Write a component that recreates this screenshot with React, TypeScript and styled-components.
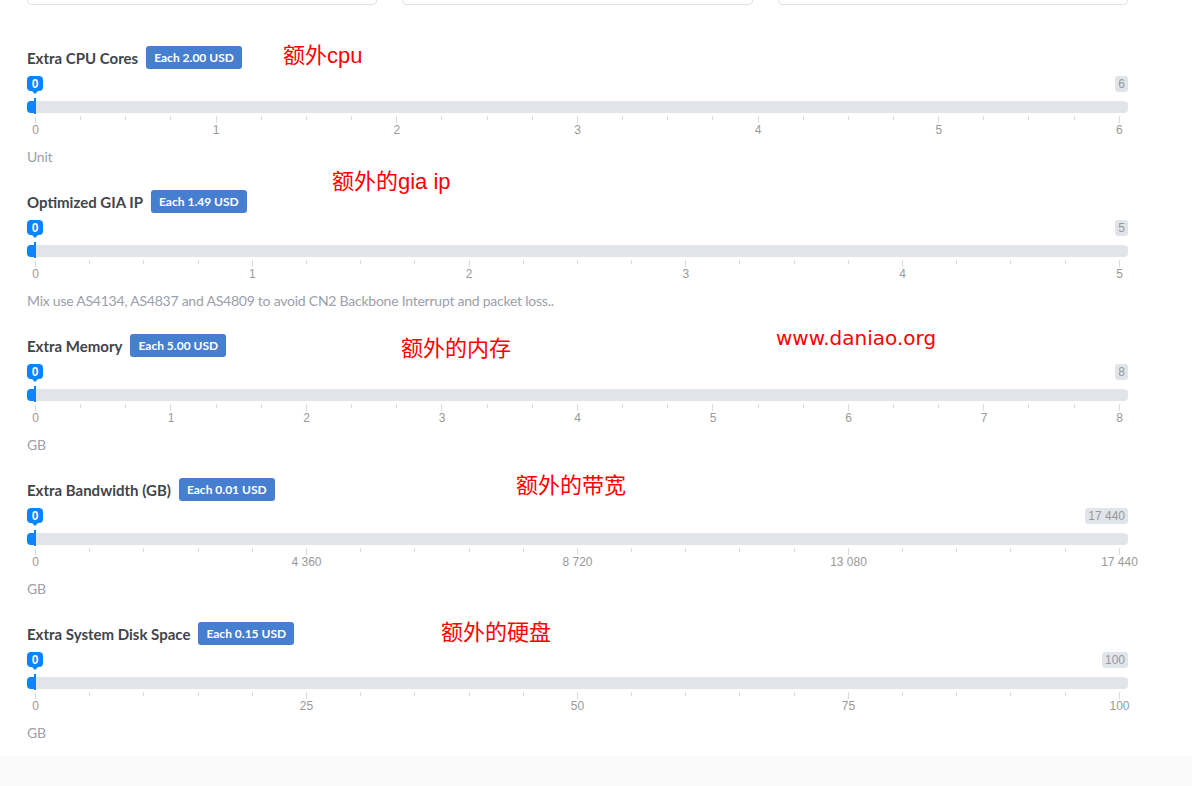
import React from "react";
import styled, { createGlobalStyle } from "styled-components";

const Global = createGlobalStyle`
  html, body { margin: 0; padding: 0; background: #fafafa; }
  body { font-family: "Lato", "Noto Sans", sans-serif; overflow: hidden; }
  #root { min-height: 786px; }
`;

const Page = styled.div`
  position: relative;
  height: 786px;
  overflow: hidden;
  background: #fafafa;
`;

const Sheet = styled.div`
  background: #ffffff;
  padding: 0 64px 13px 27px;
  display: flex;
  flex-direction: column;
`;

const CardRow = styled.div`
  display: grid;
  grid-template-columns: repeat(3, 1fr);
  gap: 25px;
  margin-top: -55px;
  margin-bottom: 41px;
`;

const Card = styled.div`
  height: 58px;
  border: 1px solid #e1e3e8;
  border-radius: 4px;
  background: #fff;
`;

const Sections = styled.div`
  display: flex;
  flex-direction: column;
  gap: 23px;
`;

const Section = styled.section`
  display: flex;
  flex-direction: column;
`;

const Header = styled.div`
  display: flex;
  align-items: center;
  gap: 8px;
  height: 23px;
`;

const Title = styled.h3`
  margin: 0;
  font-size: 15px;
  font-weight: 700;
  color: #41444b;
`;

const Badge = styled.span`
  display: inline-flex;
  align-items: center;
  height: 23px;
  padding: 0 8px;
  border-radius: 3px;
  background: #467fcf;
  color: #fff;
  font-size: 12px;
  font-weight: 700;
`;

const TopRow = styled.div`
  display: flex;
  justify-content: space-between;
  align-items: flex-start;
  height: 16px;
  margin-top: 7px;
`;

const Tip = styled.span`
  position: relative;
  display: inline-flex;
  align-items: center;
  justify-content: center;
  min-width: 16px;
  height: 15px;
  border-radius: 4px;
  background: #0a84ff;
  color: #fff;
  font-family: "Liberation Sans", Arial, sans-serif;
  font-size: 12px;
  font-weight: 700;
  &::after {
    content: "";
    position: absolute;
    left: 50%;
    bottom: -3px;
    margin-left: -3px;
    border-left: 3px solid transparent;
    border-right: 3px solid transparent;
    border-top: 3px solid #0a84ff;
  }
`;

const MaxLabel = styled.span`
  display: inline-flex;
  align-items: center;
  height: 16px;
  padding: 0 3px;
  border-radius: 3px;
  background: #e1e4e9;
  color: #999;
  font-family: "Liberation Sans", Arial, sans-serif;
  font-size: 12px;
`;

const Track = styled.div`
  position: relative;
  height: 12px;
  margin-top: 9px;
  border-radius: 4px;
  background: #e1e4e9;
`;

const Fill = styled.div`
  width: 8px;
  height: 100%;
  border-radius: 4px 0 0 4px;
  background: #0a84ff;
`;

const Handle = styled.div`
  position: absolute;
  left: 7px;
  top: -3px;
  width: 2px;
  height: 16px;
  background: #0a84ff;
`;

const TickRow = styled.div`
  display: flex;
  justify-content: space-between;
  align-items: flex-start;
  height: 7px;
  margin-top: 3px;
  padding: 0 8px;
`;

const Tick = styled.span<{ $major?: boolean }>`
  width: 1px;
  height: ${(p) => (p.$major ? "7px" : "4px")};
  background: #d8dbdf;
`;

const LabelRow = styled.div`
  display: flex;
  justify-content: space-between;
  height: 14px;
  padding: 0 8px;
`;

const Label = styled.span`
  width: 1px;
  display: flex;
  justify-content: center;
  white-space: nowrap;
  font-family: "Liberation Sans", Arial, sans-serif;
  font-size: 12px;
  line-height: 14px;
  color: #999;
`;

const Hint = styled.div`
  margin-top: 10px;
  font-size: 14px;
  line-height: 20px;
  letter-spacing: -0.24px;
  color: #9aa0ac;
`;

const Note = styled.div<{ $x: number; $y: number; $latin?: boolean }>`
  position: absolute;
  left: ${(p) => p.$x}px;
  top: ${(p) => p.$y}px;
  font-family: ${(p) =>
    p.$latin
      ? '"DejaVu Sans", "Noto Sans CJK SC", sans-serif'
      : '"Liberation Sans", "Noto Sans CJK SC", sans-serif'};
  font-size: ${(p) => (p.$latin ? "20px" : "22px")};
  line-height: 22px;
  color: #ff0000;
  white-space: nowrap;
`;

type Item = {
  title: string;
  price: string;
  labels: string[];
  minor: number;
  hint: string;
};

const items: Item[] = [
  { title: "Extra CPU Cores", price: "Each 2.00 USD", labels: ["0", "1", "2", "3", "4", "5", "6"], minor: 3, hint: "Unit" },
  {
    title: "Optimized GIA IP",
    price: "Each 1.49 USD",
    labels: ["0", "1", "2", "3", "4", "5"],
    minor: 3,
    hint: "Mix use AS4134, AS4837 and AS4809 to avoid CN2 Backbone Interrupt and packet loss..",
  },
  { title: "Extra Memory", price: "Each 5.00 USD", labels: ["0", "1", "2", "3", "4", "5", "6", "7", "8"], minor: 2, hint: "GB" },
  { title: "Extra Bandwidth (GB)", price: "Each 0.01 USD", labels: ["0", "4 360", "8 720", "13 080", "17 440"], minor: 4, hint: "GB" },
  { title: "Extra System Disk Space", price: "Each 0.15 USD", labels: ["0", "25", "50", "75", "100"], minor: 4, hint: "GB" },
];

function Ticks({ labels, minor }: { labels: string[]; minor: number }) {
  const ticks: React.ReactNode[] = [];
  labels.forEach((_, i) => {
    ticks.push(<Tick key={`M${i}`} $major />);
    if (i < labels.length - 1) {
      for (let j = 0; j < minor; j++) ticks.push(<Tick key={`m${i}-${j}`} />);
    }
  });
  return <TickRow>{ticks}</TickRow>;
}

function RangeSection({ item }: { item: Item }) {
  return (
    <Section>
      <Header>
        <Title>{item.title}</Title>
        <Badge>{item.price}</Badge>
      </Header>
      <TopRow>
        <Tip>0</Tip>
        <MaxLabel>{item.labels[item.labels.length - 1]}</MaxLabel>
      </TopRow>
      <Track>
        <Fill />
        <Handle />
      </Track>
      <Ticks labels={item.labels} minor={item.minor} />
      <LabelRow>
        {item.labels.map((l) => (
          <Label key={l}>{l}</Label>
        ))}
      </LabelRow>
      <Hint>{item.hint}</Hint>
    </Section>
  );
}

export default function App() {
  return (
    <Page>
      <Global />
      <Sheet>
        <CardRow>
          <Card />
          <Card />
          <Card />
        </CardRow>
        <Sections>
          {items.map((it) => (
            <RangeSection key={it.title} item={it} />
          ))}
        </Sections>
      </Sheet>
      <Note $x={283} $y={45}>额外cpu</Note>
      <Note $x={332} $y={171}>额外的gia ip</Note>
      <Note $x={776} $y={327} $latin>www.daniao.org</Note>
      <Note $x={401} $y={338}>额外的内存</Note>
      <Note $x={516} $y={475}>额外的带宽</Note>
      <Note $x={441} $y={622}>额外的硬盘</Note>
    </Page>
  );
}
